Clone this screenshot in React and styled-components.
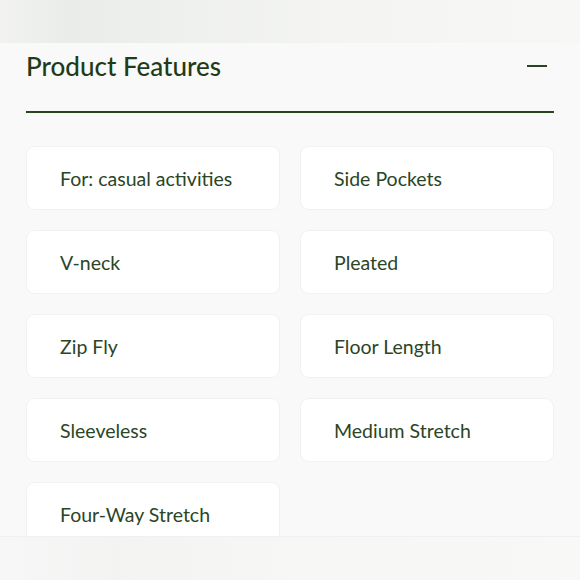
import styled, { createGlobalStyle } from "styled-components";

const GlobalStyle = createGlobalStyle`
  html, body {
    margin: 0;
    padding: 0;
    background: #f9f9f9;
    font-family: Lato, "Noto Sans", sans-serif;
    overflow: hidden;
  }
`;

const Page = styled.div`
  width: 580px;
  height: 580px;
  position: relative;
  overflow: hidden;
  background: #f9f9f9;
`;

const TopStrip = styled.div`
  height: 43px;
  background: linear-gradient(90deg, #f2f3f1 0%, #e9ece8 12%, #eef0ed 30%, #f4f5f3 60%, #f7f7f6 100%);
`;

const Section = styled.section`
  padding: 0 26px;
`;

const Header = styled.div`
  display: flex;
  justify-content: space-between;
  align-items: flex-start;
  height: 70px;
  padding-top: 7px;
  box-sizing: border-box;
  border-bottom: 2px solid #2a4422;
`;

const Title = styled.h2`
  margin: 0;
  font-size: 26px;
  font-weight: 500;
  color: #1f3b17;
  line-height: 32px;
`;

const Toggle = styled.button`
  border: 0;
  background: none;
  padding: 0;
  width: 20px;
  height: 32px;
  margin-right: 7px;
  display: flex;
  align-items: center;
  cursor: pointer;

  &::before {
    content: "";
    display: block;
    width: 20px;
    height: 2px;
    background: #2a4422;
  }
`;

const Grid = styled.div`
  display: grid;
  grid-template-columns: 252px 252px;
  gap: 22px;
  padding: 34px 0 0 1px;
`;

const Card = styled.div`
  height: 62px;
  background: #ffffff;
  border-radius: 8px;
  box-shadow: 0 0 0 1px #f1f1f1;
  display: flex;
  align-items: center;
  padding-left: 33px;
  font-size: 19.5px;
  color: #2b4526;
`;

const BottomStrip = styled.div`
  position: absolute;
  left: 0;
  right: 0;
  bottom: 0;
  height: 43px;
  border-top: 1px solid #f0f0f0;
  background: linear-gradient(90deg, #f7f7f7 0%, #f3f3f2 20%, #f6f6f5 45%, #f8f8f7 100%);
`;

const features = [
  "For: casual activities",
  "Side Pockets",
  "V-neck",
  "Pleated",
  "Zip Fly",
  "Floor Length",
  "Sleeveless",
  "Medium Stretch",
  "Four-Way Stretch",
];

export default function App() {
  return (
    <Page>
      <GlobalStyle />
      <TopStrip />
      <Section>
        <Header>
          <Title>Product Features</Title>
          <Toggle aria-label="Collapse" />
        </Header>
        <Grid>
          {features.map((f) => (
            <Card key={f}>{f}</Card>
          ))}
        </Grid>
      </Section>
      <BottomStrip />
    </Page>
  );
}
